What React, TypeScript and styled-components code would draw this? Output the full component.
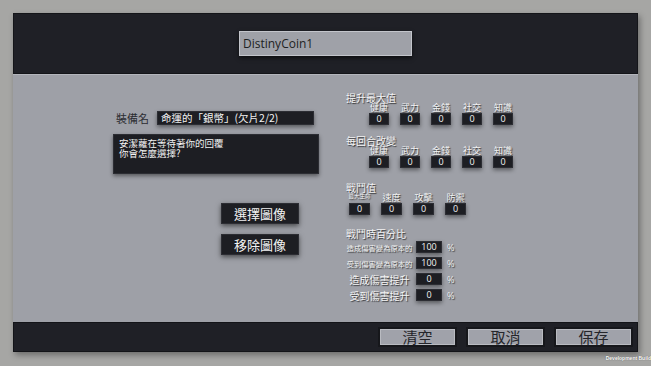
import React from "react";
import styled, { createGlobalStyle } from "styled-components";

const Global = createGlobalStyle`
  html, body { margin: 0; padding: 0; background: #a6a6a4; }
  body { width: 651px; height: 366px; overflow: hidden;
    font-family: "Open Sans", "Noto Sans CJK TC", sans-serif; }
`;

const Page = styled.div`
  width: 651px;
  height: 366px;
  padding: 13px 13px 0 13px;
  box-sizing: border-box;
  display: flex;
  flex-direction: column;
`;

const Panel = styled.div`
  width: 625px;
  display: flex;
  flex-direction: column;
  box-shadow: 2px 3px 6px rgba(0, 0, 0, 0.35);
`;

const Header = styled.div`
  height: 61px;
  background: #1f2026;
  display: flex;
  justify-content: center;
  align-items: flex-start;
  padding-top: 17px;
  box-sizing: border-box;
  border: 1px solid #141519;
`;

const TitleInput = styled.div`
  width: 173px;
  height: 25px;
  box-sizing: border-box;
  background: #9fa1a8;
  border: 1px solid #c3c5cb;
  box-shadow: 0 2px 4px rgba(0, 0, 0, 0.6);
  color: #1e1f23;
  font-size: 12px;
  line-height: 23px;
  padding-left: 3px;
  font-family: "Open Sans", sans-serif;
`;

const Body = styled.div`
  height: 248px;
  background: #9ea0a7;
  border-top: 1px solid #b4b6bc;
  box-sizing: border-box;
  display: flex;
  padding-left: 100px;
`;

const LeftCol = styled.div`
  width: 206px;
  padding-top: 36px;
  display: flex;
  flex-direction: column;
`;

const NameRow = styled.div`
  display: flex;
  align-items: center;
  height: 14px;
`;

const NameLabel = styled.div`
  width: 44px;
  padding-left: 3px;
  box-sizing: border-box;
  font-size: 11px;
  color: #2b2c31;
  font-family: "Noto Sans CJK TC", sans-serif;
`;

const DarkField = styled.div`
  background: #1d1e23;
  border: 1px solid #2c2d33;
  color: #f2f2f2;
  box-shadow: 0 2px 4px rgba(0, 0, 0, 0.45);
  box-sizing: border-box;
  font-family: "Noto Sans CJK TC", sans-serif;
`;

const NameInput = styled(DarkField)`
  width: 157px;
  height: 14px;
  font-size: 10.5px;
  line-height: 12px;
  padding-left: 3px;
  white-space: nowrap;
`;

const DescBox = styled(DarkField)`
  margin-top: 9px;
  width: 206px;
  height: 40px;
  font-size: 9.5px;
  line-height: 10px;
  padding: 3px 0 0 5px;
`;

const ImgButton = styled(DarkField)<{ $top: number }>`
  margin-left: 108px;
  margin-top: ${(p) => p.$top}px;
  width: 78px;
  height: 21px;
  font-size: 13px;
  line-height: 19px;
  text-align: center;
  box-shadow: 0 2px 5px rgba(0, 0, 0, 0.55);
`;

const RightCol = styled.div`
  margin-left: 27px;
  padding-top: 17px;
  display: flex;
  flex-direction: column;
  font-family: "Noto Sans CJK TC", sans-serif;
  color: #f4f4f4;
`;

const SectionTitle = styled.div<{ $top: number }>`
  margin-top: ${(p) => p.$top}px;
  font-size: 10px;
  line-height: 11px;
  height: 11px;
  white-space: nowrap;
  text-shadow: 1px 1px 1px rgba(0, 0, 0, 0.7);
`;

const StatGrid = styled.div<{ $indent: number }>`
  display: flex;
  gap: 11px;
  margin-left: ${(p) => p.$indent}px;
`;

const StatCell = styled.div<{ $w: number }>`
  width: ${(p) => p.$w}px;
  display: flex;
  flex-direction: column;
  align-items: center;
`;

const StatLabel = styled.div<{ $tiny?: boolean }>`
  height: 10px;
  font-size: ${(p) => (p.$tiny ? 5.5 : 9)}px;
  line-height: ${(p) => (p.$tiny ? 7 : 10)}px;
  white-space: nowrap;
  text-shadow: 1px 1px 1px rgba(0, 0, 0, 0.7);
`;

const NumBox = styled(DarkField)<{ $w: number; $h?: number }>`
  width: ${(p) => p.$w}px;
  height: ${(p) => p.$h ?? 12}px;
  font-size: 9px;
  line-height: ${(p) => (p.$h ?? 12) - 2}px;
  text-align: center;
  font-family: "Open Sans", sans-serif;
`;

const PctList = styled.div`
  display: flex;
  flex-direction: column;
  gap: 4px;
  margin-top: 2px;
`;

const PctRow = styled.div`
  display: flex;
  align-items: center;
  height: 12px;
`;

const PctLabel = styled.div<{ $small?: boolean }>`
  width: 67px;
  margin-right: 3px;
  text-align: center;
  white-space: nowrap;
  font-size: ${(p) => (p.$small ? 7.4 : 10)}px;
  letter-spacing: ${(p) => (p.$small ? -0.1 : 0)}px;
  text-shadow: 1px 1px 1px rgba(0, 0, 0, 0.7);
`;

const PctSign = styled.div`
  margin-left: 5px;
  font-size: 9px;
  font-family: "Open Sans", sans-serif;
  text-shadow: 1px 1px 1px rgba(0, 0, 0, 0.7);
`;

const Footer = styled.div`
  height: 30px;
  background: #1f2026;
  border: 1px solid #131418;
  box-sizing: border-box;
  display: flex;
  justify-content: flex-end;
  align-items: flex-start;
  padding-top: 4px;
  padding-right: 4px;
  gap: 9px;
`;

const FooterButton = styled.div`
  width: 79px;
  height: 20px;
  box-sizing: border-box;
  background: #a0a2aa;
  border: 2px solid #16171b;
  box-shadow: inset 0 0 0 1px #b9bbc1;
  color: #25262b;
  font-size: 15px;
  line-height: 16px;
  text-align: center;
  font-family: "Noto Sans CJK TC", sans-serif;
`;

const BuildTag = styled.div`
  align-self: flex-end;
  margin-right: -13px;
  margin-top: 3px;
  font-size: 5px;
  line-height: 6px;
  font-weight: bold;
  color: #ffffff;
  font-family: "Liberation Sans", sans-serif;
  text-shadow: 0 0 1px rgba(0, 0, 0, 0.6);
`;

const maxStats = ["健康", "武力", "金錢", "社交", "知識"];
const battleStats = ["最大生命", "速度", "攻擊", "防禦"];

const pctRows = [
  { label: "造成傷害變為原本的", value: "100", small: true },
  { label: "受到傷害變為原本的", value: "100", small: true },
  { label: "造成傷害提升", value: "0", small: false },
  { label: "受到傷害提升", value: "0", small: false },
];

function StatRow({ labels, indent, w }: { labels: string[]; indent: number; w: number }) {
  return (
    <StatGrid $indent={indent}>
      {labels.map((s) => (
        <StatCell key={s} $w={w}>
          <StatLabel $tiny={s.length > 2}>{s}</StatLabel>
          <NumBox $w={w} $h={12}>0</NumBox>
        </StatCell>
      ))}
    </StatGrid>
  );
}

export default function App() {
  return (
    <>
      <Global />
      <Page>
        <Panel>
          <Header>
            <TitleInput>DistinyCoin1</TitleInput>
          </Header>
          <Body>
            <LeftCol>
              <NameRow>
                <NameLabel>裝備名</NameLabel>
                <NameInput>命運的「銀幣」(欠片2/2)</NameInput>
              </NameRow>
              <DescBox>
                安潔蘿在等待著你的回覆
                <br />
                你會怎麼選擇?
              </DescBox>
              <ImgButton $top={29}>選擇圖像</ImgButton>
              <ImgButton $top={10}>移除圖像</ImgButton>
            </LeftCol>
            <RightCol>
              <SectionTitle $top={0}>提升最大值</SectionTitle>
              <StatRow labels={maxStats} indent={23} w={20} />
              <SectionTitle $top={10}>每回合改變</SectionTitle>
              <StatRow labels={maxStats} indent={23} w={20} />
              <SectionTitle $top={14}>戰鬥值</SectionTitle>
              <StatRow labels={battleStats} indent={3} w={21} />
              <SectionTitle $top={13}>戰鬥時百分比</SectionTitle>
              <PctList>
                {pctRows.map((r) => (
                  <PctRow key={r.label}>
                    <PctLabel $small={r.small}>{r.label}</PctLabel>
                    <NumBox $w={26} $h={12}>
                      {r.value}
                    </NumBox>
                    <PctSign>%</PctSign>
                  </PctRow>
                ))}
              </PctList>
            </RightCol>
          </Body>
          <Footer>
            <FooterButton>清空</FooterButton>
            <FooterButton>取消</FooterButton>
            <FooterButton>保存</FooterButton>
          </Footer>
        </Panel>
        <BuildTag>Development Build</BuildTag>
      </Page>
    </>
  );
}
